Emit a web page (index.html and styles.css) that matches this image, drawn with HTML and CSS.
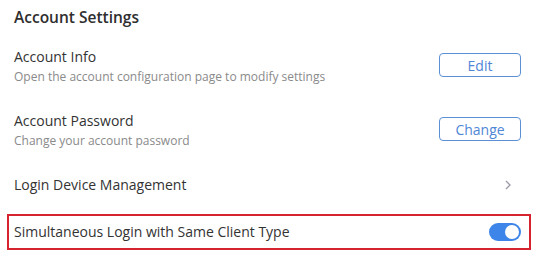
FILE: index.html
```html
<!DOCTYPE html>
<html lang="en">
<head>
  <meta charset="UTF-8" />
  <meta name="viewport" content="width=device-width, initial-scale=1" />
  <title>Account Settings</title>
  <link rel="stylesheet" href="styles.css">
</head>
<body>

  <div class="settings">
    <h2 class="settings-title">Account Settings</h2>

    <div class="row">
      <div class="row-text">
        <div class="row-name">Account Info</div>
        <div class="row-desc">Open the account configuration page to modify settings</div>
      </div>
      <button class="btn">Edit</button>
    </div>

    <div class="row">
      <div class="row-text">
        <div class="row-name">Account Password</div>
        <div class="row-desc">Change your account password</div>
      </div>
      <button class="btn">Change</button>
    </div>

    <div class="row">
      <div class="row-name">Login Device Management</div>
      <svg class="chevron" width="6" height="10" viewBox="0 0 6 10">
        <path d="M1 1 L5 5 L1 9" fill="none" stroke="#9a9aa6" stroke-width="1.3" />
      </svg>
    </div>

    <!-- riga evidenziata -->
    <div class="row row-marked">
      <div class="row-name">Simultaneous Login with Same Client Type</div>
      <div class="toggle on"><span class="knob"></span></div>
    </div>
  </div>

</body>
</html>
```

FILE: styles.css
```css
body {
  margin: 0;
  background-color: #ffffff;
  font-family: "Open Sans", Arial, sans-serif;
  color: #333;
}
.settings {
  padding: 6px 28px 0 14px;
}
.settings-title {
  margin: 0;
  font-size: 15.5px;
  font-weight: 600;
  line-height: 22px;
  color: #2e2e2e;
}
.row {
  display: flex;
  align-items: center;
  justify-content: space-between;
  margin-top: 26px;
}
.settings-title + .row {
  margin-top: 19px;
}
.row-name {
  font-size: 14px;
  line-height: 20px;
  color: #333;
}
.row-desc {
  margin-top: 2px;
  font-size: 12px;
  line-height: 16px;
  color: #8a8a8a;
}
.btn {
  width: 82px;
  height: 24px;
  padding: 0;
  margin-bottom: 2px;
  font-family: "Open Sans", Arial, sans-serif;
  font-size: 14px;
  color: #4f86d6;
  background-color: #fff;
  border: 1px solid #5b8fd6;
  border-radius: 4px;
  cursor: pointer;
}
.chevron {
  margin-right: 10px;
}
.row-marked {
  margin: 19px -10px 0 -7px;
  padding: 6px 8px 6px 5px;
  border: 2px solid #d52330;
}
.toggle {
  width: 32px;
  height: 18px;
  border-radius: 9px;
  background-color: #3d85e8;
  position: relative;
}
.knob {
  position: absolute;
  top: 2px;
  right: 2px;
  width: 14px;
  height: 14px;
  border-radius: 50%;
  background-color: #fff;
}
```
